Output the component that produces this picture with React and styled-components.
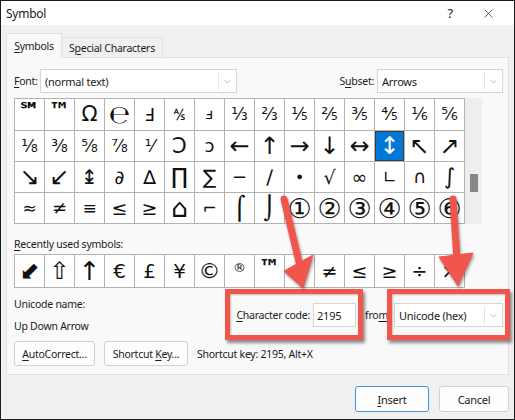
import React from 'react';
import styled, { createGlobalStyle } from 'styled-components';
import { ChevronDown, X } from 'lucide-react';

const GlobalStyle = createGlobalStyle`
  html, body { margin: 0; padding: 0; background: #ffffff; }
  body { font-family: "Noto Sans", "Liberation Sans", sans-serif; }
`;

const Dialog = styled.div`
  position: relative;
  width: 515px;
  height: 420px;
  box-sizing: border-box;
  border: 1px solid #1c1c1c;
  background: #f0f0f0;
  font-family: "Noto Sans", "Liberation Sans", sans-serif;
  font-size: 10.5px;
  letter-spacing: -0.25px;
  color: #1a1a1a;
  display: flex;
  flex-direction: column;
  overflow: hidden;
`;

const TitleBar = styled.div`
  height: 24px;
  flex: none;
  background: #ffffff;
  display: flex;
  align-items: center;
  padding-left: 5px;
  font-size: 12px;
`;

const TitleActions = styled.div`
  margin-left: auto;
  display: flex;
  align-items: center;
  gap: 28px;
  padding-right: 18px;
  font-size: 13px;
`;

const TabStrip = styled.div`
  display: flex;
  align-items: flex-end;
  height: 25px;
  margin-top: 8px;
  padding-left: 5px;
  margin-bottom: -1px;
  position: relative;
  z-index: 1;
`;

const Tab = styled.div`
  box-sizing: border-box;
  height: ${p => (p.$active ? 25 : 21)}px;
  width: ${p => p.$w}px;
  display: flex;
  align-items: center;
  justify-content: center;
  background: ${p => (p.$active ? '#f9f9f9' : '#f0f0f0')};
  border: 1px solid #e1e1e1;
  border-bottom: ${p => (p.$active ? 'none' : '1px solid #e1e1e1')};
  border-left: ${p => (p.$active ? '1px solid #e1e1e1' : 'none')};
`;

const U = styled.span`
  text-decoration: underline;
  text-underline-offset: 2px;
`;

const Panel = styled.div`
  margin: 0 5px;
  height: 318px;
  box-sizing: border-box;
  border: 1px solid #e1e1e1;
  background: #f9f9f9;
  padding: 11px 5px 8px 7px;
  display: flex;
  flex-direction: column;
`;

const FieldRow = styled.div`
  display: flex;
  align-items: center;
  height: 24px;
`;

const FieldLabel = styled.span`
  width: ${p => p.$w || 'auto'};
  margin-right: ${p => p.$mr || 0}px;
  margin-left: ${p => p.$ml || 0}px;
  white-space: nowrap;
`;

const Select = styled.div`
  box-sizing: border-box;
  width: ${p => p.$w}px;
  height: 24px;
  background: #ffffff;
  border: 1px solid #d6d6d6;
  display: flex;
  align-items: stretch;
  margin-left: ${p => p.$ml || 0}px;
`;

const SelectText = styled.div`
  flex: 1;
  display: flex;
  align-items: center;
  padding-left: 4px;
  font-size: 11px;
`;

const SelectButton = styled.div`
  width: 17px;
  margin: 2px 0;
  border-left: 1px solid #e4e4e4;
  display: flex;
  align-items: center;
  justify-content: center;
  color: #8a8a8a;
`;

const Spacer = styled.div`
  flex: 1;
`;

const GridWrap = styled.div`
  display: flex;
  margin-top: 5px;
`;

const SymbolGrid = styled.div`
  display: grid;
  grid-template-columns: repeat(15, 29px);
  grid-template-rows: ${p => p.$rows};
  gap: 1px;
  background: #b3b3b3;
  border: 1px solid #b3b3b3;
  width: max-content;
`;

const Cell = styled.div`
  background: ${p => (p.$selected ? '#0078d7' : '#ffffff')};
  color: ${p => (p.$selected ? '#ffffff' : '#111111')};
  box-shadow: ${p => (p.$selected ? 'inset 0 0 0 1px #4d3a2c' : 'none')};
  display: flex;
  align-items: ${p => (p.$top ? 'flex-start' : 'center')};
  padding-top: ${p => p.$pt || 0}px;
  box-sizing: border-box;
  justify-content: center;
  font-family: "DejaVu Sans", "Noto Sans CJK JP", "Noto Sans", sans-serif;
  font-size: ${p => p.$size || 18}px;
  font-weight: ${p => (p.$bold ? 700 : 400)};
  letter-spacing: 0;
  line-height: 1;
  overflow: hidden;
`;

const Scrollbar = styled.div`
  width: 17px;
  height: 126px;
  background: #eeeeee;
  display: flex;
  justify-content: center;
`;

const Thumb = styled.div`
  width: 8px;
  height: 18px;
  margin-top: 76px;
  background: #868686;
`;

const SectionLabel = styled.div`
  margin-top: ${p => p.$mt || 0}px;
  line-height: 16px;
  height: 16px;
  white-space: nowrap;
`;

const RecentRow = styled(SymbolGrid)`
  margin-top: 2px;
`;

const InfoRow = styled.div`
  display: flex;
  align-items: flex-start;
  margin-top: 8px;
`;

const InfoColumn = styled.div`
  display: flex;
  flex-direction: column;
  gap: 6px;
  width: 225px;
`;

const CodeGroup = styled.div`
  display: flex;
  align-items: center;
  margin-top: 7px;
`;

const TextInput = styled.div`
  box-sizing: border-box;
  width: 43px;
  height: 24px;
  background: #ffffff;
  border: 1px solid #d6d6d6;
  display: flex;
  align-items: center;
  padding-left: 3px;
  margin-left: 3px;
  font-size: 11px;
`;

const ButtonRow = styled.div`
  display: flex;
  align-items: center;
  margin-top: 7px;
  gap: 9px;
`;

const Button = styled.div`
  box-sizing: border-box;
  width: ${p => p.$w}px;
  height: ${p => p.$h || 25}px;
  background: #fdfdfd;
  border: 1px solid ${p => (p.$default ? '#4a90d9' : '#d0d0d0')};
  border-radius: 3px;
  display: flex;
  align-items: center;
  justify-content: center;
  white-space: nowrap;
  font-size: ${p => p.$fs || 10.5}px;
`;

const Footer = styled.div`
  display: flex;
  justify-content: flex-end;
  gap: 10px;
  margin-top: 11px;
  padding-right: 5px;
`;

const Highlight = styled.div`
  position: absolute;
  left: ${p => p.$x}px;
  top: ${p => p.$y}px;
  width: ${p => p.$w}px;
  height: ${p => p.$h}px;
  box-sizing: border-box;
  border: 5px solid #f0564c;
  box-shadow: 2px 3px 3px rgba(0, 0, 0, 0.45), inset 1px 1px 2px rgba(0, 0, 0, 0.25);
  pointer-events: none;
`;

const ArrowLayer = styled.svg`
  position: absolute;
  left: -1px;
  top: -1px;
  pointer-events: none;
  filter: drop-shadow(1px 2px 1.5px rgba(0, 0, 0, 0.4));
`;

const A = 24;

const grid = [
  [
    { c: '℠', s: 22, b: true, top: true, pt: 1 }, { c: '™', s: 22, b: true, top: true, pt: 1 }, { c: 'Ω', s: 21 }, { c: '℮', s: 25 },
    { c: 'Ⅎ' }, { c: '⅍', s: 16 }, { c: 'ⅎ', s: 15 }, { c: '⅓', s: 17 }, { c: '⅔', s: 17 },
    { c: '⅕', s: 17 }, { c: '⅖', s: 17 }, { c: '⅗', s: 17 }, { c: '⅘', s: 17 }, { c: '⅙', s: 17 }, { c: '⅚', s: 17 },
  ],
  [
    { c: '⅛', s: 17 }, { c: '⅜', s: 17 }, { c: '⅝', s: 17 }, { c: '⅞', s: 17 }, { c: '⅟', s: 17 },
    { c: 'Ↄ', s: 21 }, { c: 'ↄ', s: 18 }, { c: '←', s: A }, { c: '↑', s: A }, { c: '→', s: A },
    { c: '↓', s: A }, { c: '↔', s: A }, { c: '↕', s: A, sel: true }, { c: '↖', s: A }, { c: '↗', s: A },
  ],
  [
    { c: '↘', s: A }, { c: '↙', s: A }, { c: '↨', s: 20 }, { c: '∂', s: 19 }, { c: '∆', s: 19 },
    { c: '∏', s: 22 }, { c: '∑', s: 20 }, { c: '−', s: 18 }, { c: '∕', s: 20 }, { c: '∙', s: 16 },
    { c: '√', s: 19 }, { c: '∞', s: 19 }, { c: '∟', s: 17 }, { c: '∩', s: 18 }, { c: '∫', s: 22 },
  ],
  [
    { c: '≈', s: 17 }, { c: '≠', s: 18 }, { c: '≡', s: 17 }, { c: '≤', s: 19 }, { c: '≥', s: 19 },
    { c: '⌂', s: 26 }, { c: '⌐', s: 17 }, { c: '⌠', s: 23 }, { c: '⌡', s: 23 }, { c: '①', s: 27 },
    { c: '②', s: 27 }, { c: '③', s: 27 }, { c: '④', s: 27 }, { c: '⑤', s: 27 }, { c: '⑥', s: 27 },
  ],
];

const recent = [
  { c: '⬋', s: 24 }, { c: '⇧', s: 24 }, { c: '↑', s: 26 }, { c: '€', s: 20 }, { c: '£', s: 20 },
  { c: '¥', s: 20 }, { c: '©', s: 22 }, { c: '®', s: 13, top: true, pt: 6 }, { c: '™', s: 22, b: true, top: true, pt: 2 },
  { c: '±', s: 19 }, { c: '≠', s: 19 }, { c: '≤', s: 19 }, { c: '≥', s: 19 }, { c: '÷', s: 19 }, { c: '×', s: 19 },
];

function Dropdown({ width, value, ml }) {
  return (
    <Select $w={width} $ml={ml}>
      <SelectText>{value}</SelectText>
      <SelectButton>
        <ChevronDown size={11} strokeWidth={1.2} />
      </SelectButton>
    </Select>
  );
}

export default function App() {
  return (
    <>
      <GlobalStyle />
      <Dialog>
        <TitleBar>
          Symbol
          <TitleActions>
            <span>?</span>
            <X size={15} strokeWidth={1.1} />
          </TitleActions>
        </TitleBar>

        <TabStrip>
          <Tab $active $w={56}><span><U>S</U>ymbols</span></Tab>
          <Tab $w={101}><span>S<U>p</U>ecial Characters</span></Tab>
        </TabStrip>

        <Panel>
          <FieldRow>
            <FieldLabel $w="26px"><U>F</U>ont:</FieldLabel>
            <Dropdown width={197} value="(normal text)" />
            <Spacer />
            <FieldLabel $mr={3}>S<U>u</U>bset:</FieldLabel>
            <Dropdown width={126} value="Arrows" />
          </FieldRow>

          <GridWrap>
            <SymbolGrid $rows="31px 30px 30px 30px">
              {grid.flat().map((g, i) => (
                <Cell key={i} $size={g.s} $bold={g.b} $top={g.top} $pt={g.pt} $selected={g.sel}>{g.c}</Cell>
              ))}
            </SymbolGrid>
            <Scrollbar>
              <Thumb />
            </Scrollbar>
          </GridWrap>

          <SectionLabel $mt={12}><U>R</U>ecently used symbols:</SectionLabel>
          <RecentRow $rows="32px">
            {recent.map((g, i) => (
              <Cell key={i} $size={g.s} $bold={g.b} $top={g.top} $pt={g.pt}>{g.c}</Cell>
            ))}
          </RecentRow>

          <InfoRow>
            <InfoColumn>
              <SectionLabel>Unicode name:</SectionLabel>
              <SectionLabel>Up Down Arrow</SectionLabel>
            </InfoColumn>
            <CodeGroup>
              <FieldLabel><U>C</U>haracter code:</FieldLabel>
              <TextInput>2195</TextInput>
              <FieldLabel $ml={9}>fro<U>m</U></FieldLabel>
              <Dropdown width={109} value="Unicode (hex)" ml={6} />
            </CodeGroup>
          </InfoRow>

          <ButtonRow>
            <Button $w={81}><span><U>A</U>utoCorrect...</span></Button>
            <Button $w={84}><span>Shortcut <U>K</U>ey...</span></Button>
            <span>Shortcut key: 2195, Alt+X</span>
          </ButtonRow>
        </Panel>

        <Footer>
          <Button $w={74} $h={26} $fs={11} $default><span><U>I</U>nsert</span></Button>
          <Button $w={70} $h={26} $fs={11}><span>Cancel</span></Button>
        </Footer>

        <Highlight $x={224} $y={288} $w={138} $h={51} />
        <Highlight $x={386} $y={288} $w={123} $h={51} />

        <ArrowLayer width="515" height="420" viewBox="0 0 515 420">
          <g fill="#f0564c" stroke="#f0564c">
            <line x1="284" y1="199" x2="299" y2="262" strokeWidth="7" strokeLinecap="round" />
            <polygon points="284,271 313,255 303,288" strokeWidth="1" strokeLinejoin="round" />
            <line x1="453" y1="199" x2="457" y2="260" strokeWidth="7" strokeLinecap="round" />
            <polygon points="439,257 473,253 458,286" strokeWidth="1" strokeLinejoin="round" />
          </g>
        </ArrowLayer>
      </Dialog>
    </>
  );
}
